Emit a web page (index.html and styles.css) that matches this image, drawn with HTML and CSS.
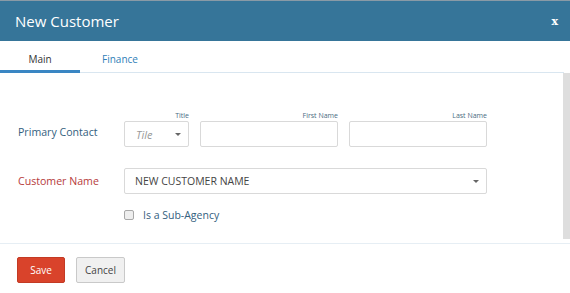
FILE: index.html
```html
<!DOCTYPE html>
<html>
<head>
<meta charset="utf-8">
<link rel="stylesheet" href="styles.css">
</head>
<body>
<div class="modal">
  <header class="modal-header">
    <h1 class="modal-title">New Customer</h1>
    <span class="close">x</span>
  </header>
  <nav class="tabs">
    <span class="tab active">Main</span>
    <span class="tab">Finance</span>
    <span class="tab-rest"></span>
  </nav>
  <div class="content">
    <div class="body">
      <div class="row row-contact">
        <label class="label">Primary Contact</label>
        <div class="field f-title">
          <span class="mini">Title</span>
          <div class="select small"><span class="ph">Tile</span><span class="caret"></span></div>
        </div>
        <div class="field f-name">
          <span class="mini">First Name</span>
          <div class="input"></div>
        </div>
        <div class="field f-name">
          <span class="mini">Last Name</span>
          <div class="input"></div>
        </div>
      </div>
      <div class="row row-customer">
        <label class="label required">Customer Name</label>
        <div class="select wide"><span class="val">NEW CUSTOMER NAME</span><span class="caret"></span></div>
      </div>
      <div class="row row-check">
        <span class="checkbox"></span>
        <span class="check-label">Is a Sub-Agency</span>
      </div>
    </div>
    <div class="scrollbar"></div>
  </div>
  <footer class="footer">
    <button class="btn btn-save">Save</button>
    <button class="btn btn-cancel">Cancel</button>
  </footer>
</div>
</body>
</html>
```
FILE: styles.css
```css
* { box-sizing: border-box; }
html, body { margin: 0; padding: 0; background: #fff; }
body { font-family: "Open Sans", "Noto Sans", sans-serif; width: 570px; height: 293px; overflow: hidden; }
.modal { width: 570px; height: 293px; display: flex; flex-direction: column; }
.modal-header {
  height: 41px; background: #367599; border-top: 1px solid #8a9aa6;
  display: flex; align-items: center; justify-content: space-between;
  padding: 0 12px 0 15px;
}
.modal-title { margin: 0; font-size: 15px; font-weight: 400; color: #fff; line-height: 1; }
.close { color: #fff; font-family: "DejaVu Serif", serif; font-weight: bold; font-size: 11px; line-height: 1; }
.tabs { height: 32px; display: flex; align-items: stretch; }
.tab {
  font-size: 10px; padding-top: 11px; color: #2f80b8; text-align: center;
  border-bottom: 1px solid #d9e6f0;
}
.tab:first-child { width: 80px; color: #333; border-bottom: 3px solid #3a86c3; }
.tab:nth-child(2) { width: 80px; }
.tab-rest { flex: 1; border-bottom: 1px solid #d9e6f0; margin-right: 6px; }
.content { display: flex; height: 171px; border-bottom: 1px solid #e6eef4; }
.body { flex: 1; padding: 39px 0 0 18px; }
.scrollbar { width: 7px; background: #dedede; margin-bottom: 4px; }
.row { display: flex; align-items: flex-end; }
.label { width: 106px; font-size: 10.6px; color: #34607e; }
.label.required { color: #b63b3b; }
.row-contact .label { padding-bottom: 8px; }
.field { display: flex; flex-direction: column; align-items: flex-end; margin-right: 11px; }
.mini { font-size: 7px; color: #4a6b82; margin-bottom: 1px; line-height: 8px; }
.f-title { width: 65px; }
.select, .input {
  height: 26px; border: 1px solid #d9d9d9; border-radius: 2px; background: #fff;
  display: flex; align-items: center; justify-content: space-between;
}
.small { width: 65px; padding: 0 7px 0 11px; }
.f-name .input { width: 138px; }
.ph { font-style: italic; color: #999; font-size: 11px; }
.caret { width: 0; height: 0; border-left: 3px solid transparent; border-right: 3px solid transparent; border-top: 3px solid #666; }
.row-customer { margin-top: 21px; align-items: center; }
.wide { width: 363px; padding: 0 7px 0 10px; }
.val { font-size: 10.5px; color: #444; }
.row-check { margin-top: 14px; padding-left: 106px; align-items: center; }
.checkbox { width: 10px; height: 10px; border: 1px solid #a8a8a8; border-radius: 2px; background: #eee; margin-right: 9px; }
.check-label { font-size: 10.5px; color: #34607e; }
.footer { display: flex; gap: 11px; padding: 13px 0 0 17px; }
.btn { height: 26px; font-family: "Open Sans", sans-serif; font-size: 10px; border-radius: 2px; padding: 0; }
.btn-save { width: 48px; background: #d9432b; color: #fff; border: 1px solid #c33a24; }
.btn-cancel { width: 49px; background: #f0f0f0; color: #444; border: 1px solid #c9c9c9; }
```
